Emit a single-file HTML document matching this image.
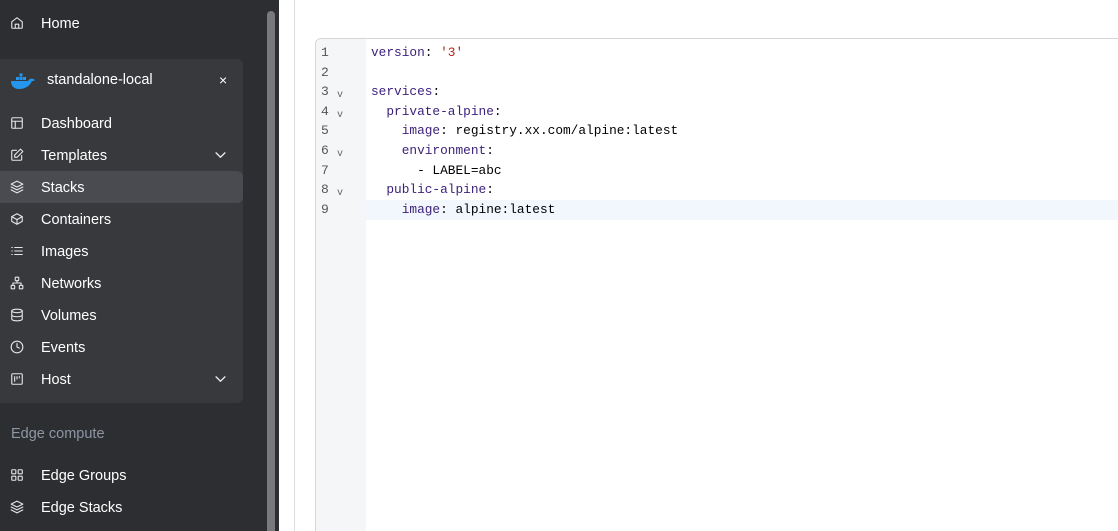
<!DOCTYPE html><html><head><style>
*{margin:0;padding:0;box-sizing:border-box}
html,body{width:1118px;height:531px;overflow:hidden}
body{background:#fff;font-family:"Liberation Sans",sans-serif;position:relative}
#sb{position:absolute;left:0;top:0;width:279px;height:531px;background:#2d2e32;overflow:hidden}
#thumb{position:absolute;left:267px;top:11px;width:8px;height:530px;border-radius:4px;background:#78787d}
#env{position:absolute;left:0;top:59px;width:243px;height:344px;background:#38393d;border-radius:0 6px 6px 0}
.it{position:absolute;left:0;width:243px;height:32px;color:#fff;font-size:14.5px;line-height:34px;padding-left:41px}
.it svg{position:absolute;left:10px;top:9px;width:14px;height:14px;fill:none;stroke:#e6e6e8;stroke-width:1.9;stroke-linecap:round;stroke-linejoin:round}
.it svg.chev{left:215px;top:13px;width:11px;height:7px;stroke-width:1.6}
.act{background:#4a4b50;border-radius:0 6px 6px 0}
#vl{position:absolute;left:294px;top:0;width:1px;height:531px;background:#dcdde1}
#ed{position:absolute;left:315px;top:38px;width:820px;height:500px;border:1px solid #d4d6da;border-radius:6px;background:#fff;overflow:hidden}
#gut{position:absolute;left:0;top:0;width:50px;height:100%;background:#f5f6f8}
.ln{position:absolute;left:5px;font-family:"Liberation Mono",monospace;font-size:13px;color:#555}
.fd{position:absolute;left:21px;font-family:"Liberation Mono",monospace;font-size:10px;color:#666}
.cl{position:absolute;left:55px;font-family:"Liberation Mono",monospace;font-size:12.8px;color:#000;white-space:pre;height:19.6px;line-height:19.6px}
.k{color:#3b1f7a}.s{color:#b3261e}
</style></head><body>
<div id="sb">
<div class="it" style="top:7px"><svg viewBox="0 0 24 24"><path d="M3 10l9-7 9 7v10a1 1 0 0 1-1 1H4a1 1 0 0 1-1-1z"/><path d="M9 21v-7h6v7"/></svg>Home</div>
<div id="env">
<div class="it" style="top:4px;padding-left:47px;left:0">
<svg viewBox="0 0 24 16" style="left:11px;top:10px;width:24px;height:16px;fill:#2496ed;stroke:none"><rect x="5" y="4" width="3" height="3"/><rect x="8.5" y="4" width="3" height="3"/><rect x="12" y="4" width="3" height="3"/><rect x="8.5" y="0.5" width="3" height="3"/><path d="M0 8h17c1-2 3-3 5-2 1 0 2 1 2 1-1 1-2 1-3 1-2 5-7 8-13 8-5 0-8-3-8-8z"/></svg>standalone-local<span style="position:absolute;left:219px;font-size:14px">×</span></div>
<div class="it" style="top:48px"><svg viewBox="0 0 24 24"><rect x="3" y="3" width="18" height="18" rx="2"/><path d="M3 9h18M9 9v12"/></svg>Dashboard</div>
<div class="it" style="top:80px"><svg viewBox="0 0 24 24"><path d="M11 4H5a2 2 0 0 0-2 2v13a2 2 0 0 0 2 2h13a2 2 0 0 0 2-2v-6"/><path d="M18 2l4 4-10 10H8v-4z"/></svg>Templates<svg class="chev" viewBox="0 0 12 8"><path d="M1 1l5 5 5-5"/></svg></div>
<div class="it act" style="top:112px"><svg viewBox="0 0 24 24"><path d="M12 2L2 7l10 5 10-5z"/><path d="M2 12l10 5 10-5M2 17l10 5 10-5"/></svg>Stacks</div>
<div class="it" style="top:144px"><svg viewBox="0 0 24 24"><path d="M21 16V8l-9-5-9 5v8l9 5z"/><path d="M3 8l9 5 9-5M12 13v8"/></svg>Containers</div>
<div class="it" style="top:176px"><svg viewBox="0 0 24 24"><path d="M8 6h13M8 12h13M8 18h13M3 6h1M3 12h1M3 18h1"/></svg>Images</div>
<div class="it" style="top:208px"><svg viewBox="0 0 24 24"><rect x="9" y="2" width="6" height="6" rx="1"/><rect x="2" y="16" width="6" height="6" rx="1"/><rect x="16" y="16" width="6" height="6" rx="1"/><path d="M12 8v4M5 16v-4h14v4"/></svg>Networks</div>
<div class="it" style="top:240px"><svg viewBox="0 0 24 24"><ellipse cx="12" cy="5" rx="9" ry="3"/><path d="M3 5v14c0 1.7 4 3 9 3s9-1.3 9-3V5M3 12c0 1.7 4 3 9 3s9-1.3 9-3"/></svg>Volumes</div>
<div class="it" style="top:272px"><svg viewBox="0 0 24 24"><circle cx="12" cy="12" r="10"/><path d="M12 6v6l4 2"/></svg>Events</div>
<div class="it" style="top:304px"><svg viewBox="0 0 24 24"><rect x="3" y="3" width="18" height="18" rx="2"/><path d="M8 8v8M12 8v4M16 8v2"/></svg>Host<svg class="chev" viewBox="0 0 12 8"><path d="M1 1l5 5 5-5"/></svg></div>
</div>
<div style="position:absolute;left:11px;top:426px;color:#8e96a3;font-size:14.5px">Edge compute</div>
<div class="it" style="top:459px"><svg viewBox="0 0 24 24"><rect x="3" y="3" width="7" height="7" rx="1"/><rect x="14" y="3" width="7" height="7" rx="1"/><rect x="3" y="14" width="7" height="7" rx="1"/><rect x="14" y="14" width="7" height="7" rx="1"/></svg>Edge Groups</div>
<div class="it" style="top:491px"><svg viewBox="0 0 24 24"><path d="M12 2L2 7l10 5 10-5z"/><path d="M2 12l10 5 10-5M2 17l10 5 10-5"/></svg>Edge Stacks</div>
<div id="thumb"></div>
</div>
<div id="vl"></div>
<div id="ed">
<div id="gut"></div>
<div style="position:absolute;left:50px;top:161px;width:800px;height:20px;background:#f1f7fd"></div>
<div class="ln" style="top:6px">1</div><div class="ln" style="top:26px">2</div><div class="ln" style="top:45px">3</div><div class="ln" style="top:65px">4</div><div class="ln" style="top:84px">5</div><div class="ln" style="top:104px">6</div><div class="ln" style="top:124px">7</div><div class="ln" style="top:143px">8</div><div class="ln" style="top:163px">9</div>
<div class="fd" style="top:51px">v</div><div class="fd" style="top:71px">v</div><div class="fd" style="top:110px">v</div><div class="fd" style="top:149px">v</div>
<div class="cl" style="top:4px"><span class="k">version</span>: <span class="s">'3'</span></div>
<div class="cl" style="top:43px"><span class="k">services</span>:</div>
<div class="cl" style="top:63px">  <span class="k">private-alpine</span>:</div>
<div class="cl" style="top:82px">    <span class="k">image</span>: registry.xx.com/alpine:latest</div>
<div class="cl" style="top:102px">    <span class="k">environment</span>:</div>
<div class="cl" style="top:122px">      - LABEL=abc</div>
<div class="cl" style="top:141px">  <span class="k">public-alpine</span>:</div>
<div class="cl" style="top:161px">    <span class="k">image</span>: alpine:latest</div>
</div>
</body></html>
